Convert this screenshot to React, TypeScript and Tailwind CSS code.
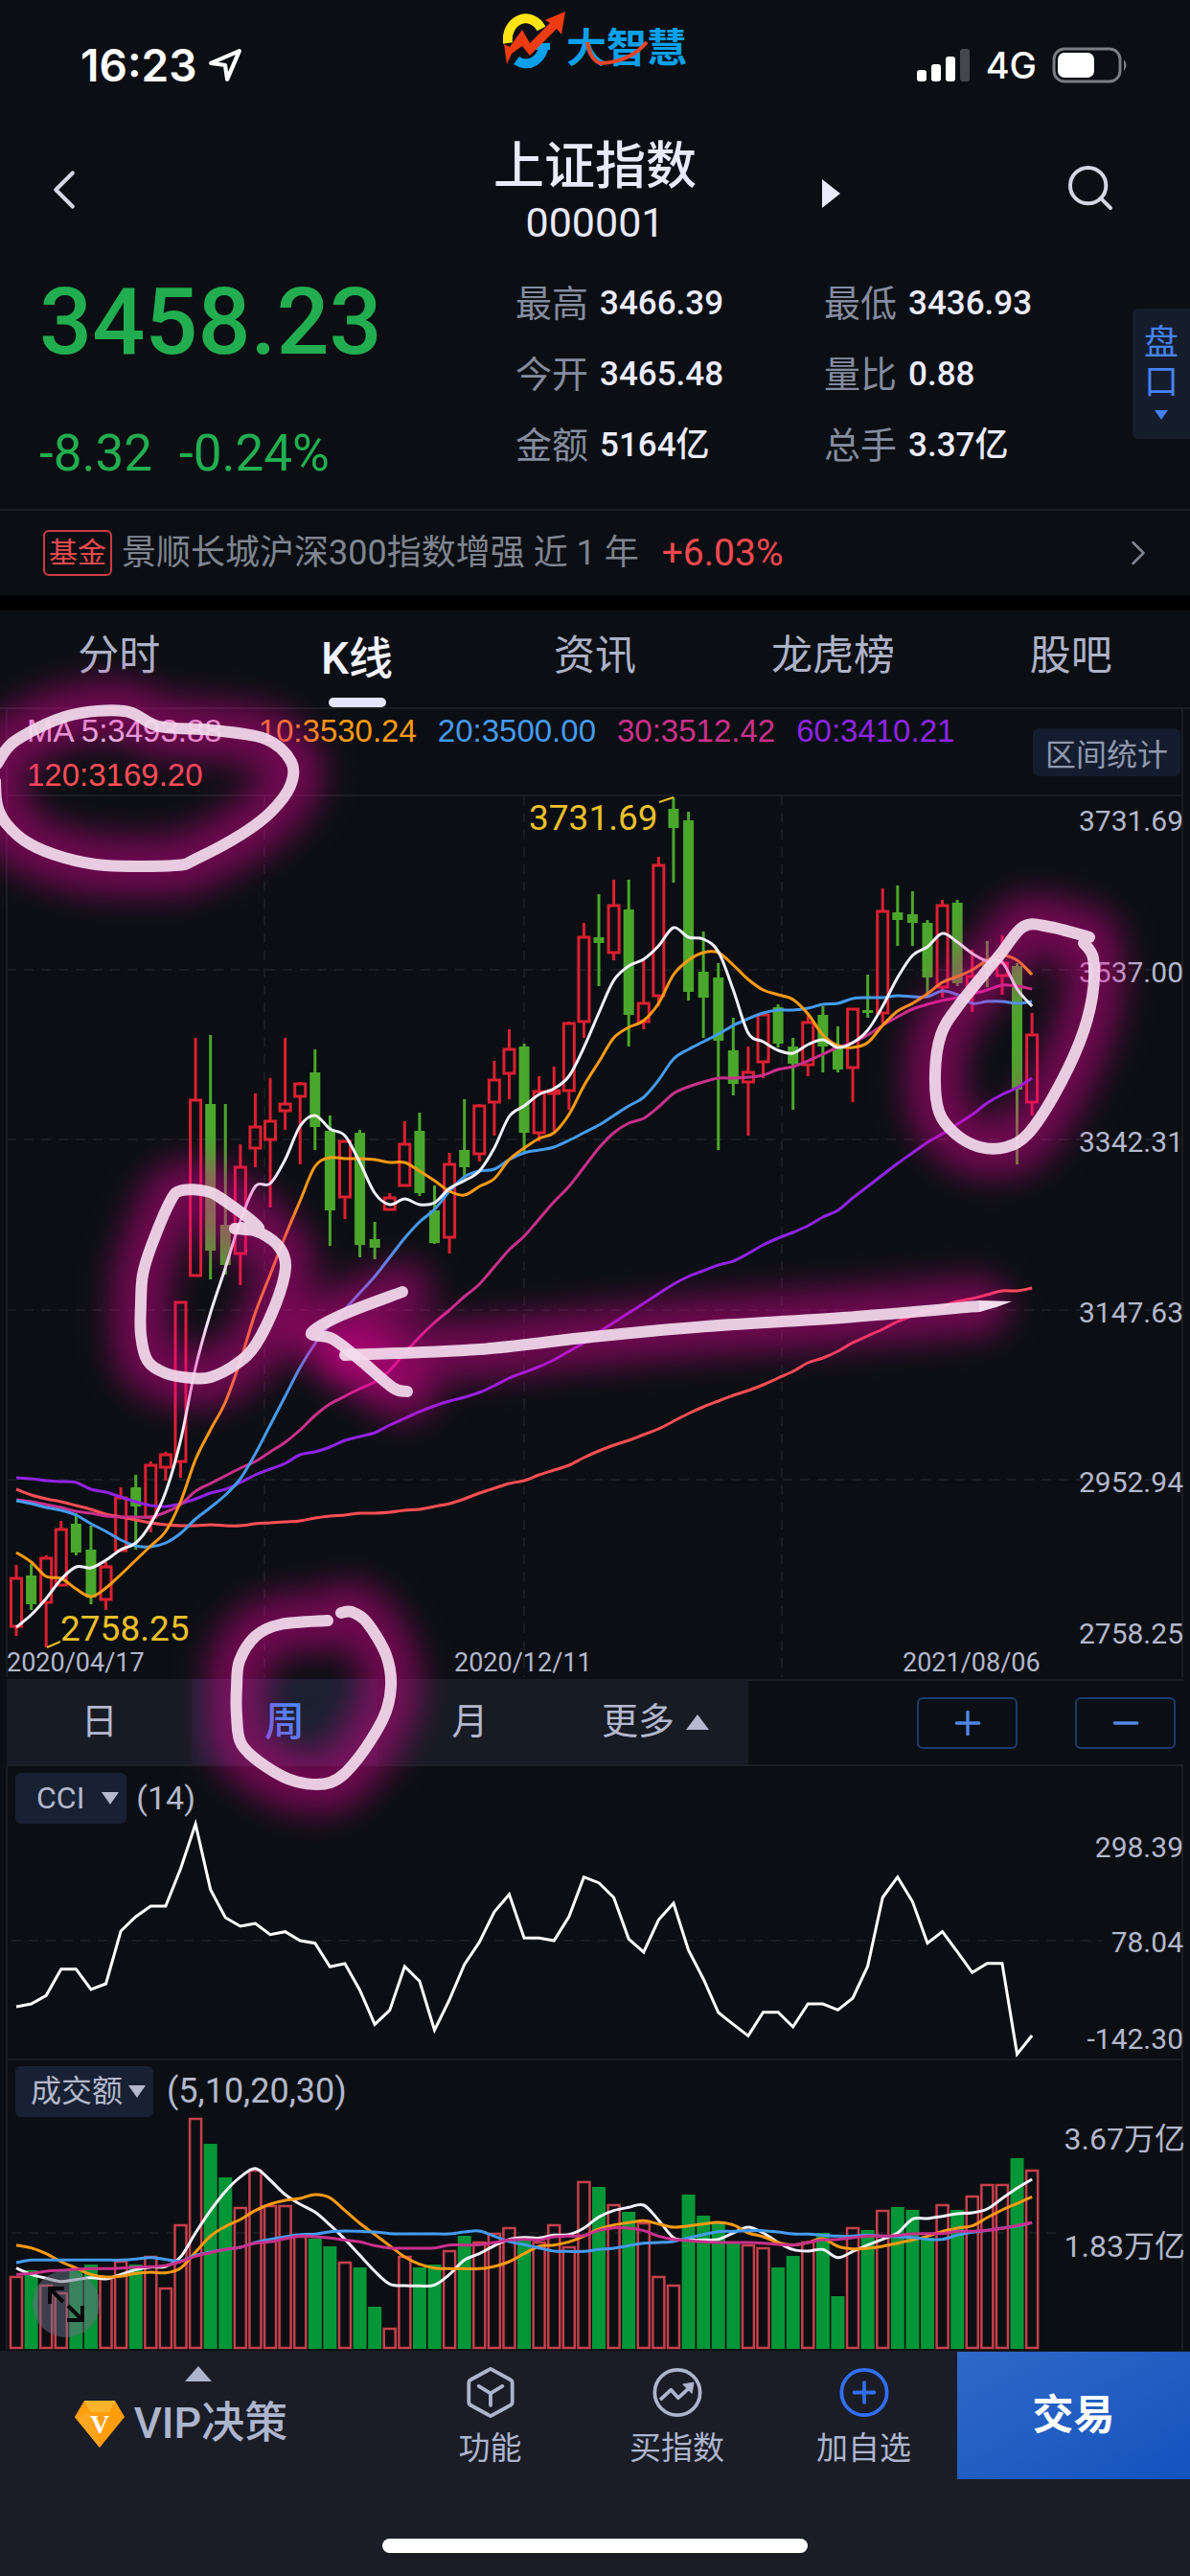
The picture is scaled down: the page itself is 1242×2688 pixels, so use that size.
import React from 'react';
import { ChevronLeft, ChevronRight, Minus, Plus, Search } from 'lucide-react';

type Point = [number, number];
type Candle = ['r' | 'g', number, number, number, number];

const STEP = 15.59;
const xAt = (i: number) => 17 + STEP * i;

// [direction, body top, body bottom, high, low] in chart canvas units
const candles: Candle[] = [
  ['r', 1647, 1697, 1633, 1707], ['g', 1644, 1674, 1632, 1680], ['r', 1626, 1672, 1623, 1719],
  ['r', 1596, 1654, 1587, 1654], ['g', 1590, 1620, 1579, 1623], ['g', 1617, 1667, 1592, 1674],
  ['r', 1635, 1669, 1630, 1680], ['r', 1563, 1618, 1552, 1618], ['g', 1552, 1572, 1539, 1617],
  ['r', 1529, 1583, 1525, 1599], ['r', 1518, 1531, 1515, 1545], ['r', 1359, 1525, 1359, 1542],
  ['r', 1148, 1331, 1083, 1331], ['g', 1152, 1305, 1080, 1335], ['g', 1278, 1320, 1152, 1330],
  ['r', 1218, 1308, 1194, 1341], ['r', 1176, 1198, 1141, 1218], ['r', 1170, 1189, 1125, 1260],
  ['r', 1152, 1159, 1083, 1179], ['r', 1131, 1144, 1129, 1215], ['g', 1119, 1176, 1095, 1200],
  ['g', 1180, 1263, 1164, 1300], ['r', 1191, 1249, 1191, 1272], ['g', 1182, 1299, 1179, 1312],
  ['g', 1293, 1302, 1275, 1314], ['r', 1250, 1262, 1245, 1263], ['r', 1194, 1237, 1170, 1238],
  ['g', 1180, 1245, 1161, 1248], ['g', 1263, 1297, 1237, 1298], ['r', 1215, 1291, 1203, 1308],
  ['g', 1200, 1218, 1147, 1230], ['r', 1154, 1204, 1152, 1212], ['r', 1127, 1150, 1107, 1185],
  ['r', 1095, 1120, 1074, 1147], ['g', 1092, 1182, 1089, 1203], ['r', 1139, 1182, 1123, 1191],
  ['r', 1138, 1141, 1113, 1180], ['r', 1068, 1138, 1066, 1158], ['r', 978, 1066, 963, 1083],
  ['g', 978, 984, 933, 1029], ['r', 945, 994, 918, 1002], ['g', 949, 1059, 918, 1092],
  ['r', 1047, 1066, 1000, 1074], ['r', 903, 1039, 894, 1050], ['g', 844, 864, 832, 921],
  ['g', 856, 1035, 847, 1044], ['g', 1014, 1041, 972, 1083], ['g', 1020, 1086, 1005, 1200],
  ['g', 1096, 1131, 1062, 1143], ['r', 1119, 1129, 1092, 1185], ['r', 1059, 1108, 1057, 1125],
  ['g', 1051, 1089, 1048, 1093], ['g', 1092, 1110, 1083, 1158], ['r', 1067, 1111, 1057, 1123],
  ['g', 1059, 1092, 1050, 1119], ['g', 1092, 1116, 1071, 1119], ['r', 1053, 1114, 1053, 1150],
  ['g', 1054, 1057, 1017, 1062], ['r', 951, 1057, 927, 1068], ['g', 952, 960, 924, 987],
  ['g', 954, 963, 930, 987], ['g', 963, 1020, 960, 1040], ['r', 945, 1030, 939, 1041],
  ['g', 942, 1026, 939, 1029], ['r', 1019, 1031, 991, 1056], ['g', 1000, 1010, 982, 1030],
  ['r', 1005, 1018, 976, 1038], ['g', 1008, 1137, 1005, 1215], ['r', 1080, 1150, 1057, 1164],
];

const averages = [
  {
    color: '#ff4f55',
    values: [1554, 1560, 1564, 1567, 1571, 1575, 1580, 1583, 1586, 1589, 1591, 1592, 1592, 1591, 1592, 1592, 1590, 1589, 1588, 1587, 1584, 1582, 1581, 1579, 1579, 1578, 1576, 1575, 1572, 1569, 1564, 1558, 1553, 1548, 1545, 1539, 1534, 1529, 1521, 1514, 1508, 1503, 1497, 1491, 1483, 1475, 1468, 1462, 1456, 1451, 1445, 1438, 1431, 1422, 1417, 1410, 1401, 1394, 1387, 1379, 1373, 1368, 1363, 1358, 1355, 1351, 1347, 1347, 1344],
  },
  {
    color: '#8f24e6',
    values: [1542, 1543, 1545, 1546, 1547, 1554, 1557, 1562, 1567, 1571, 1572, 1569, 1564, 1558, 1554, 1547, 1539, 1533, 1527, 1518, 1515, 1510, 1503, 1499, 1495, 1487, 1480, 1473, 1467, 1462, 1458, 1453, 1446, 1438, 1432, 1426, 1419, 1410, 1401, 1390, 1380, 1370, 1360, 1350, 1340, 1332, 1326, 1320, 1316, 1308, 1299, 1292, 1286, 1279, 1270, 1263, 1250, 1238, 1226, 1214, 1203, 1192, 1183, 1173, 1163, 1151, 1142, 1135, 1125],
  },
  {
    color: '#c9308c',
    values: [1565, 1567, 1570, 1573, 1577, 1579, 1582, 1583, 1583, 1583, 1578, 1570, 1556, 1548, 1540, 1532, 1525, 1515, 1505, 1492, 1477, 1465, 1457, 1449, 1442, 1430, 1412, 1395, 1380, 1367, 1353, 1340, 1322, 1304, 1290, 1272, 1254, 1238, 1218, 1198, 1182, 1172, 1167, 1155, 1141, 1134, 1129, 1125, 1125, 1124, 1122, 1116, 1113, 1107, 1100, 1093, 1088, 1080, 1070, 1061, 1053, 1048, 1044, 1041, 1037, 1033, 1028, 1029, 1032],
  },
  {
    color: '#459bf0',
    values: [1566, 1569, 1573, 1576, 1581, 1590, 1598, 1607, 1613, 1614, 1610, 1600, 1585, 1573, 1560, 1543, 1517, 1487, 1457, 1427, 1402, 1382, 1366, 1349, 1332, 1312, 1292, 1275, 1262, 1243, 1228, 1222, 1220, 1210, 1203, 1200, 1197, 1190, 1182, 1174, 1164, 1154, 1145, 1127, 1105, 1095, 1087, 1079, 1070, 1063, 1057, 1054, 1054, 1052, 1048, 1047, 1042, 1041, 1041, 1039, 1040, 1040, 1034, 1038, 1047, 1045, 1045, 1047, 1045],
  },
  {
    color: '#ff9a13',
    values: [1620, 1630, 1645, 1647, 1658, 1666, 1657, 1643, 1628, 1613, 1598, 1567, 1523, 1492, 1463, 1420, 1370, 1330, 1290, 1253, 1217, 1208, 1209, 1209, 1210, 1213, 1213, 1222, 1232, 1243, 1247, 1238, 1230, 1210, 1198, 1188, 1182, 1163, 1133, 1108, 1083, 1072, 1065, 1047, 1017, 1002, 994, 994, 1007, 1022, 1033, 1038, 1043, 1058, 1080, 1091, 1093, 1088, 1070, 1055, 1047, 1037, 1025, 1019, 1012, 1002, 997, 1002, 1017],
  },
  {
    color: '#f1f1fb',
    values: [1698, 1685, 1668, 1648, 1635, 1636, 1628, 1617, 1610, 1590, 1557, 1503, 1427, 1370, 1323, 1274, 1238, 1235, 1210, 1175, 1164, 1178, 1185, 1213, 1245, 1257, 1251, 1257, 1255, 1240, 1232, 1222, 1198, 1165, 1154, 1142, 1136, 1123, 1093, 1057, 1023, 1008, 1001, 987, 968, 978, 980, 993, 1033, 1078, 1087, 1096, 1099, 1090, 1085, 1093, 1088, 1075, 1050, 1020, 997, 988, 974, 983, 995, 1003, 1004, 1032, 1050],
  },
];

// CCI samples, three units to one canvas unit
const cci = [1062, 1053, 1027, 944, 944, 1008, 990, 825, 780, 747, 747, 630, 490, 695, 783, 810, 801, 836, 827, 855, 863, 937, 927, 1010, 1117, 1073, 936, 982, 1135, 1040, 930, 860, 765, 710, 847, 847, 855, 780, 656, 674, 720, 850, 891, 790, 738, 885, 975, 1080, 1117, 1153, 1079, 1079, 1125, 1053, 1053, 1072, 1035, 935, 720, 656, 733, 863, 827, 890, 955, 926, 926, 1210, 1152];

const volumeDirs = 'rgrrggrrgrrrrggrrrrrggrggrrggrgrrrgrrrrgrgrrrggggrrggrggrgrgggrgrrrgr';
const volumeTops = [2375, 2369, 2384, 2392, 2367, 2363, 2376, 2359, 2363, 2354, 2387, 2321, 2210, 2237, 2272, 2303, 2264, 2301, 2301, 2333, 2336, 2344, 2360, 2366, 2407, 2429, 2354, 2366, 2363, 2348, 2333, 2339, 2330, 2324, 2335, 2339, 2321, 2344, 2276, 2282, 2300, 2308, 2319, 2375, 2384, 2290, 2312, 2318, 2341, 2342, 2345, 2366, 2354, 2339, 2330, 2396, 2324, 2327, 2306, 2303, 2306, 2335, 2300, 2306, 2291, 2279, 2279, 2252, 2264];

// same scale as the CCI samples
const volumeAverages = [
  {
    color: '#f1f1fb',
    values: [680, 700, 712, 722, 716, 710, 714, 700, 685, 677, 675, 645, 570, 500, 440, 395, 368, 405, 450, 480, 505, 545, 590, 640, 690, 730, 735, 736, 733, 700, 655, 635, 610, 590, 584, 586, 577, 575, 555, 520, 500, 490, 483, 530, 585, 592, 592, 590, 570, 552, 570, 600, 622, 627, 622, 647, 628, 608, 590, 570, 527, 525, 518, 510, 507, 495, 462, 430, 402],
  },
  {
    color: '#ff9a13',
    values: [608, 617, 635, 660, 680, 700, 708, 706, 697, 693, 695, 680, 630, 580, 550, 528, 500, 480, 468, 462, 450, 460, 500, 540, 575, 610, 645, 668, 680, 682, 682, 682, 675, 660, 635, 612, 608, 598, 580, 558, 545, 538, 532, 542, 552, 548, 542, 537, 545, 570, 582, 600, 608, 600, 588, 612, 620, 618, 612, 602, 592, 580, 565, 555, 548, 522, 498, 478, 457],
  },
  {
    color: '#459bf0',
    values: [663, 655, 655, 655, 655, 655, 655, 655, 652, 647, 653, 658, 640, 630, 622, 615, 600, 590, 582, 575, 574, 566, 564, 565, 567, 572, 573, 573, 573, 573, 567, 564, 580, 597, 607, 617, 627, 628, 628, 622, 618, 610, 602, 600, 597, 585, 575, 566, 565, 563, 563, 567, 573, 574, 577, 580, 580, 577, 580, 582, 584, 590, 590, 577, 568, 562, 555, 548, 538],
  },
  {
    color: '#c9308c',
    values: [700, 697, 690, 687, 684, 682, 682, 680, 677, 676, 672, 660, 643, 632, 622, 615, 602, 598, 588, 580, 582, 586, 592, 598, 610, 617, 618, 618, 617, 608, 608, 607, 600, 592, 590, 592, 582, 580, 578, 562, 554, 555, 563, 580, 590, 594, 598, 600, 600, 600, 602, 606, 608, 600, 592, 590, 585, 580, 580, 578, 573, 572, 572, 565, 565, 562, 556, 547, 538],
  },
];

const strokes: Point[][] = [
  [[-3, 797], [16, 773], [71, 747], [130, 742], [166, 758], [222, 762], [277, 771], [304, 795], [303, 820], [283, 847], [253, 870], [205, 896], [183, 903], [110, 903], [67, 895], [30, 880], [7, 860], [-3, 840], [-5, 815]],
  [[245, 1282], [270, 1281], [233, 1252], [215, 1243], [190, 1242], [178, 1253], [158, 1300], [149, 1330], [147, 1360], [147, 1393], [154, 1420], [173, 1433], [200, 1438], [220, 1437], [247, 1423], [267, 1403], [288, 1360], [298, 1323], [292, 1302], [273, 1287], [252, 1281]],
  [[1137, 978], [1095, 967], [1068, 967], [1043, 997], [1000, 1050], [982, 1080], [976, 1120], [980, 1160], [997, 1183], [1023, 1197], [1050, 1197], [1073, 1183], [1100, 1143], [1127, 1087], [1140, 1040], [1141, 1000], [1131, 984]],
  [[342, 1691], [293, 1695], [267, 1707], [250, 1733], [247, 1760], [247, 1790], [252, 1820], [277, 1843], [309, 1859], [345, 1860], [372, 1837], [400, 1793], [408, 1760], [403, 1727], [383, 1693], [367, 1682], [356, 1683]],
  [[1022, 1363], [879, 1375], [737, 1384], [618, 1395], [500, 1408], [360, 1414]],
  [[420, 1348], [357, 1372], [325, 1391], [347, 1397], [377, 1420], [410, 1448], [425, 1452]],
];

function smooth(points: Point[]) {
  let d = `M${points[0][0]} ${points[0][1]}`;
  for (let i = 0; i < points.length - 1; i++) {
    const p0 = points[i - 1] ?? points[i];
    const p1 = points[i];
    const p2 = points[i + 1];
    const p3 = points[i + 2] ?? p2;
    d += `C${p1[0] + (p2[0] - p0[0]) / 6} ${p1[1] + (p2[1] - p0[1]) / 6} ${p2[0] - (p3[0] - p1[0]) / 6} ${p2[1] - (p3[1] - p1[1]) / 6} ${p2[0]} ${p2[1]}`;
  }
  return d;
}

const StatusBar = () => (
  <div className="flex h-32 items-start justify-between pl-[84px] pr-16">
    <div className="flex flex-1 items-center gap-3 pt-9 font-[Inter] text-[46px] font-semibold leading-[64px] text-white">
      16:23
      <svg viewBox="0 0 34 34" className="size-9" fill="none" stroke="white" strokeWidth="4" strokeLinejoin="round">
        <path d="M31 3 L3 15 L17 17 L19 31 Z" />
      </svg>
    </div>
    <div className="mr-5 flex pt-2">
      <svg viewBox="527 8 66 66" className="size-[66px]">
        <path d="M532 45 A19 22 0 0 1 567 30" fill="none" stroke="#ffe312" strokeWidth="10" />
        <path d="M570 45 A19 22 0 0 1 541 63" fill="none" stroke="#0ba0ea" strokeWidth="10" />
        <path d="M557 45 H576 V52 H557Z" fill="#0ba0ea" />
        <path d="M531 67 L528 46 L534 49 L547 31 L555 45 L576 24 L571 21 L592 12 L588 36 L583 30 L555 58 L547 48 L536 56Z" fill="#ef3b12" />
      </svg>
      <div className="relative font-['Noto_Sans_CJK_SC'] text-[42px] font-bold leading-[78px] text-[#0ba0ea]">
        大智慧
        <svg viewBox="0 0 124 60" className="absolute left-0 top-3 h-[60px] w-[124px]">
          <path d="M22 24 C24 36 28 44 36 46 C58 45 74 36 84 24" fill="none" stroke="#e8442a" strokeWidth="4" />
        </svg>
      </div>
    </div>
    <div className="flex flex-1 items-center justify-end gap-4 pt-9 font-[Inter] text-[38px] font-medium leading-[64px] text-white">
      <svg viewBox="0 0 56 36" className="h-9 w-14" fill="white">
        <rect x="0" y="23" width="10" height="12" rx="3" />
        <rect x="15" y="17" width="10" height="18" rx="3" />
        <rect x="30" y="9" width="10" height="26" rx="3" />
        <rect x="45" y="1" width="10" height="34" rx="3" fill="#44474b" />
      </svg>
      4G
      <svg viewBox="0 0 80 38" className="h-[38px] w-20">
        <rect x="2" y="2" width="69" height="34" rx="11" fill="none" stroke="#7c7e81" strokeWidth="3" />
        <rect x="6" y="6" width="38" height="26" rx="7" fill="white" />
        <path d="M75 13 Q80 19 75 25Z" fill="#7c7e81" />
      </svg>
    </div>
  </div>
);

const Header = () => (
  <header className="grid grid-cols-[1fr_auto_1fr] items-center pt-4 text-[#e9eafc]">
    <button aria-label="返回" className="justify-self-start pb-2 pl-8">
      <ChevronLeft className="size-[70px] text-[#d5d7e2]" strokeWidth={1.4} />
    </button>
    <div className="text-center">
      <h1 className="text-[53px] font-medium leading-[60px]">上证指数</h1>
      <p className="text-[43px] leading-[56px]">000001</p>
    </div>
    <div className="flex items-center justify-between pl-[131px] pr-[76px]">
      <button aria-label="下一个">
        <svg viewBox="0 0 19 30" className="h-[30px] w-[19px]" fill="#e9eafc"><path d="M0 0 L19 15 L0 30Z" /></svg>
      </button>
      <button aria-label="搜索" className="pb-3">
        <Search className="size-14 text-[#d5d7e2]" strokeWidth={1.7} />
      </button>
    </div>
  </header>
);

const stats = [
  ['最高', '3466.39'], ['最低', '3436.93'],
  ['今开', '3465.48'], ['量比', '0.88'],
  ['金额', '5164亿'], ['总手', '3.37亿'],
];

const Summary = () => (
  <section className="grid h-[271px] grid-cols-[538fr_644fr_60px] items-start pt-5">
    <div className="pl-[41px] text-[#22ae50]">
      <div className="pt-1 text-[97px] font-medium leading-[104px]">3458.23</div>
      <div className="flex gap-7 pt-[54px] text-[53px] leading-[62px]">
        <span>-8.32</span>
        <span>-0.24%</span>
      </div>
    </div>
    <dl className="grid grid-cols-2 text-[35px] leading-[74px]">
      {stats.map(([label, value]) => (
        <div key={label} className="flex gap-3">
          <dt className="text-[38px] text-[#848c9f]">{label}</dt>
          <dd className="font-medium text-[#ececff]">{value}</dd>
        </div>
      ))}
    </dl>
    <button className="mt-[42px] flex flex-col items-center rounded-l-md bg-[#151c2b] pb-5 pt-4 text-[36px] leading-[41px] text-[#4583f1]">
      <span>盘</span>
      <span>口</span>
      <svg viewBox="0 0 14 10" className="mt-2 h-[10px] w-[14px]" fill="#4583f1"><path d="M0 0 H14 L7 10Z" /></svg>
    </button>
  </section>
);

const FundRow = () => (
  <a href="#fund" className="flex h-[90px] items-center border-t-2 border-[#1b1f25] pl-[45px] pr-8 text-[36px] text-[#7f8590]">
    <span className="rounded-md border-2 border-[#cc3b43] px-1 text-[30px] leading-[44px] text-[#e94a50]">基金</span>
    <span className="pl-[10px]">景顺长城沪深300指数增强 近 1 年</span>
    <span className="pl-6 text-[39px] text-[#f4484f]">+6.03%</span>
    <ChevronRight className="ml-auto size-11" strokeWidth={1.4} />
  </a>
);

const tabs = ['分时', 'K线', '资讯', '龙虎榜', '股吧'];

const Tabs = () => (
  <nav className="grid h-[103px] grid-cols-5 border-b-2 border-[#1b1f25] text-[43px] leading-[95px] text-[#adb3c8]">
    {tabs.map((tab) =>
      tab === 'K线' ? (
        <button key={tab} className="flex flex-col items-center text-[46px] font-medium leading-[101px] text-[#f2f2ff]">
          {tab}
          <span className="-mt-[10px] h-[10px] w-[60px] rounded-full bg-[#e6e6fb]" />
        </button>
      ) : (
        <button key={tab} className="self-start">{tab}</button>
      )
    )}
  </nav>
);

const Legend = () => (
  <div className="flex h-[90px] items-start justify-between pl-7 pr-[10px] font-['Liberation_Sans'] text-[33px] leading-[46px]">
    <div>
      <div className="flex gap-[22px]">
        <span className="mr-4 text-[#e6e2f5]">MA 5:3493.88</span>
        <span className="text-[#ff9a13]">10:3530.24</span>
        <span className="text-[#459bf0]">20:3500.00</span>
        <span className="text-[#c9308c]">30:3512.42</span>
        <span className="text-[#8f24e6]">60:3410.21</span>
      </div>
      <div className="text-[#ff4f55]">120:3169.20</div>
    </div>
    <button className="mt-5 rounded-md bg-[#141d2f] px-[13px] font-['Noto_Sans_CJK_SC'] text-[32px] leading-[50px] text-[#8f98ad]">区间统计</button>
  </div>
);

const priceLabels: [string, number][] = [
  ['3731.69', 867], ['3537.00', 1025], ['3342.31', 1202], ['3147.63', 1380], ['2952.94', 1557], ['2758.25', 1715],
];

const PriceChart = () => (
  <svg viewBox="0 830 1242 922" className="block w-full overflow-visible" fontFamily="Roboto, sans-serif">
    <g fill="none" stroke="#191d22" strokeWidth="2">
      <path d="M7 740 V1750 M1234 740 V1750 M7 830 H1234" />
      <path strokeDasharray="10 8" d="M7 1012 H1234 M7 1189 H1234 M7 1367 H1234 M7 1544 H1234 M276 830 V1750 M547 830 V1750 M816 830 V1750" />
    </g>
    {candles.map(([dir, top, bottom, high, low], i) => {
      const x = xAt(i);
      return dir === 'g' ? (
        <g key={i} fill="#4aa72b">
          <rect x={x - 1.5} y={high} width="3" height={low - high} />
          <rect x={x - 5.5} y={top} width="11" height={bottom - top} />
        </g>
      ) : (
        <g key={i} fill="none" stroke="#dc2032" strokeWidth="3">
          <path d={`M${x} ${high} V${top} M${x} ${bottom} V${low}`} />
          <rect x={x - 5.5} y={top} width="11" height={bottom - top} />
        </g>
      );
    })}
    {averages.map(({ color, values }) => (
      <path key={color} d={smooth(values.map((v, i) => [xAt(i), v]))} fill="none" stroke={color} strokeWidth="3" />
    ))}
    <path d="M688 837 L703 832 M49 1719 L63 1713" stroke="#e9bd27" strokeWidth="2" />
    <g fill="#ecc02a" fontSize="37">
      <text x="552" y="866">3731.69</text>
      <text x="63" y="1712">2758.25</text>
    </g>
    <g fill="#b3b8cc" fontSize="30" textAnchor="end">
      {priceLabels.map(([label, y]) => (
        <text key={label} x="1235" y={y}>{label}</text>
      ))}
    </g>
    <g fill="#b3b8cc" fontSize="27">
      <text x="7" y="1744">2020/04/17</text>
      <text x="474" y="1744">2020/12/11</text>
      <text x="942" y="1744">2021/08/06</text>
    </g>
  </svg>
);

const PeriodBar = () => (
  <div className="mx-[7px] flex h-[91px] items-stretch border-b-2 border-[#1b1f25] text-[38px] text-[#b3b8cc]">
    <div className="grid w-[63%] grid-cols-4 bg-[#171b24]">
      <button>日</button>
      <button className="bg-[#1b2030] text-[42px] font-medium text-[#4f86f5]">周</button>
      <button>月</button>
      <button className="flex items-center justify-center gap-3">
        更多
        <svg viewBox="0 0 24 16" className="h-4 w-6" fill="#b3b8cc"><path d="M12 0 L24 16 H0Z" /></svg>
      </button>
    </div>
    <div className="flex flex-1 items-center justify-end gap-[60px] border-t-2 border-[#1b1f25] pr-2 text-[#5187e6]">
      <button aria-label="放大" className="flex h-[54px] w-[105px] items-center justify-center rounded-md border-2 border-[#1c3b6d]">
        <Plus className="size-10" strokeWidth={2} />
      </button>
      <button aria-label="缩小" className="flex h-[54px] w-[105px] items-center justify-center rounded-md border-2 border-[#1c3b6d]">
        <Minus className="size-10" strokeWidth={2} />
      </button>
    </div>
  </div>
);

const IndicatorHead = ({ name, params, className }: { name: string; params: string; className: string }) => (
  <div className={`flex h-[60px] items-center pl-4 pt-[7px] leading-[53px] text-[#b3b8cc] ${className}`}>
    <button className="flex items-center rounded-md bg-[#182133] pl-4 pr-2 text-[32px]">
      {name}
      <svg viewBox="0 0 18 13" className="h-[13px] w-[18px]" fill="#b3b8cc"><path d="M0 0 H18 L9 13Z" /></svg>
    </button>
    <span>{params}</span>
  </div>
);

const CciPanel = () => (
  <section>
    <IndicatorHead name="CCI" params="(14)" className="gap-[10px] text-[34px] [&>button]:gap-[18px] [&>button]:pl-[22px]" />
    <svg viewBox="0 1903 1242 246" className="block w-full overflow-visible" fontFamily="Roboto, sans-serif">
      <path d="M7 1843 V2149 H1234 V1843" fill="none" stroke="#191d22" strokeWidth="2" />
      <path d="M12 2025 H1150" stroke="#191d22" strokeWidth="2" strokeDasharray="10 8" />
      <polyline points={cci.map((v, i) => `${xAt(i)},${1740 + v / 3}`).join(' ')} fill="none" stroke="#fff" strokeWidth="3" />
      <g fill="#b3b8cc" fontSize="30" textAnchor="end">
        <text x="1235" y="1938">298.39</text>
        <text x="1235" y="2037">78.04</text>
        <text x="1235" y="2138">-142.30</text>
      </g>
    </svg>
  </section>
);

const VolumePanel = () => (
  <section className="relative">
    <IndicatorHead name="成交额" params="(5,10,20,30)" className="gap-[14px] text-[36px] [&>button]:gap-[6px]" />
    <svg viewBox="0 2209 1242 244" className="block w-full overflow-visible" fontFamily="Roboto, 'Noto Sans CJK SC', sans-serif">
      <path d="M7 2149 V2452 M1234 2149 V2452" fill="none" stroke="#191d22" strokeWidth="2" />
      <path d="M12 2330 H1110" stroke="#191d22" strokeWidth="2" strokeDasharray="10 8" />
      {volumeTops.map((top, i) =>
        volumeDirs[i] === 'g' ? (
          <rect key={i} x={xAt(i) - 7} y={top} width="14" height={2451 - top} fill="#049637" />
        ) : (
          <rect key={i} x={xAt(i) - 6} y={top + 1} width="12" height={2449 - top} fill="none" stroke="#c5404c" strokeWidth="2.5" />
        )
      )}
      {volumeAverages.map(({ color, values }) => (
        <path key={color} d={smooth(values.map((v, i) => [xAt(i), 2140 + v / 3]))} fill="none" stroke={color} strokeWidth="3" />
      ))}
      <g fill="#b3b8cc" fontSize="32" textAnchor="end">
        <text x="1237" y="2243">3.67万亿</text>
        <text x="1237" y="2355">1.83万亿</text>
      </g>
    </svg>
    <button aria-label="全屏" className="absolute bottom-[14px] left-[34px] flex size-[70px] items-center justify-center rounded-full bg-[#6d7085]/50">
      <svg viewBox="0 0 40 40" className="size-10" fill="none" stroke="#07090c" strokeWidth="4">
        <path d="M3 20 V4 H18 M4 5 L17 18 M37 22 V37 H21 M36 36 L22 22" />
      </svg>
    </button>
  </section>
);

const HexIcon = () => (
  <svg viewBox="0 0 54 56" className="h-14 w-[54px]" fill="none" stroke="#adb5cd" strokeWidth="4" strokeLinecap="round" strokeLinejoin="round">
    <path d="M27 2 L49 14 Q51 15 51 18 V38 Q51 41 49 42 L27 54 L5 42 Q3 41 3 38 V18 Q3 15 5 14Z" />
    <path d="M14 21 L27 29 L40 21 M27 29 V42" />
  </svg>
);

const TrendIcon = () => (
  <svg viewBox="0 0 56 56" className="size-14" fill="none" stroke="#adb5cd" strokeWidth="4" strokeLinejoin="round">
    <circle cx="28" cy="28" r="25" />
    <path d="M9 36 L21 25 L29 34 L42 22" />
    <path d="M34 19 L46 17 L44 29Z" fill="#adb5cd" strokeWidth="1" />
  </svg>
);

const AddIcon = () => (
  <svg viewBox="0 0 56 56" className="size-14" fill="none" stroke="#316ff2" strokeWidth="4" strokeLinecap="round">
    <circle cx="28" cy="28" r="25" />
    <path d="M28 17 V39 M17 28 H39" />
  </svg>
);

const actions = [
  { name: '功能', icon: HexIcon },
  { name: '买指数', icon: TrendIcon },
  { name: '加自选', icon: AddIcon },
];

const BottomBar = () => (
  <footer className="bg-[#1a1d26] pb-6">
    <div className="flex h-[134px] items-stretch text-[#adb5cd]">
      <button className="flex flex-[414] flex-col items-center pt-4">
        <svg viewBox="0 0 28 16" className="h-4 w-7" fill="#adb5cd"><path d="M14 0 L28 16 H0Z" /></svg>
        <span className="flex items-center gap-[10px] pr-9 pt-3 text-[45px] font-medium leading-[64px]">
          <svg viewBox="0 0 52 50" className="h-[50px] w-[52px]">
            <path d="M10 1 H42 L52 18 L26 50 L0 18Z" fill="#ff9d0c" />
            <path d="M10 1 H42 L36 13 H16Z" fill="#f8b52c" />
            <path d="M0 18 L16 13 L26 50Z" fill="#fba61c" />
            <text x="26" y="35" textAnchor="middle" fontFamily="Liberation Serif, serif" fontWeight="bold" fontSize="28" fill="#fff">V</text>
          </svg>
          VIP决策
        </span>
      </button>
      {actions.map((action) => (
        <button key={action.name} className="flex flex-[195] flex-col items-center pt-[17px] text-[33px] leading-[64px]">
          <action.icon />
          {action.name}
        </button>
      ))}
      <button className="mt-[1px] flex-[243] bg-linear-to-br from-[#3068c6] to-[#1253bf] text-[43px] font-bold text-white">交易</button>
    </div>
    <div className="mx-auto mt-[62px] h-[15px] w-[444px] rounded-full bg-white" />
  </footer>
);

const Scribbles = () => (
  <svg viewBox="0 0 1242 2688" className="pointer-events-none absolute left-0 top-0 w-full" fill="none" strokeLinecap="round" strokeLinejoin="round">
    <defs>
      <filter id="glow" filterUnits="userSpaceOnUse" x="-100" y="600" width="1442" height="1400">
        <feGaussianBlur stdDeviation="17" />
      </filter>
    </defs>
    {strokes.map((points, i) => (
      <path key={i} d={smooth(points)} stroke="#f0089a" strokeWidth="62" strokeOpacity="0.44" filter="url(#glow)" />
    ))}
    {strokes.map((points, i) => (
      <path key={i} d={smooth(points)} stroke="#f3dcee" strokeWidth="12" strokeOpacity="0.92" />
    ))}
    <path d="M1022 1357 L1056 1358 L1040 1364 L1022 1369Z" fill="#f3dcee" />
  </svg>
);

export default function App() {
  return (
    <div className="relative min-h-screen overflow-hidden bg-[#0b0f13] font-[Roboto,'Noto_Sans_CJK_SC',sans-serif]">
      <StatusBar />
      <Header />
      <Summary />
      <FundRow />
      <div className="h-4 bg-black" />
      <Tabs />
      <Legend />
      <PriceChart />
      <PeriodBar />
      <CciPanel />
      <VolumePanel />
      <BottomBar />
      <Scribbles />
    </div>
  );
}
